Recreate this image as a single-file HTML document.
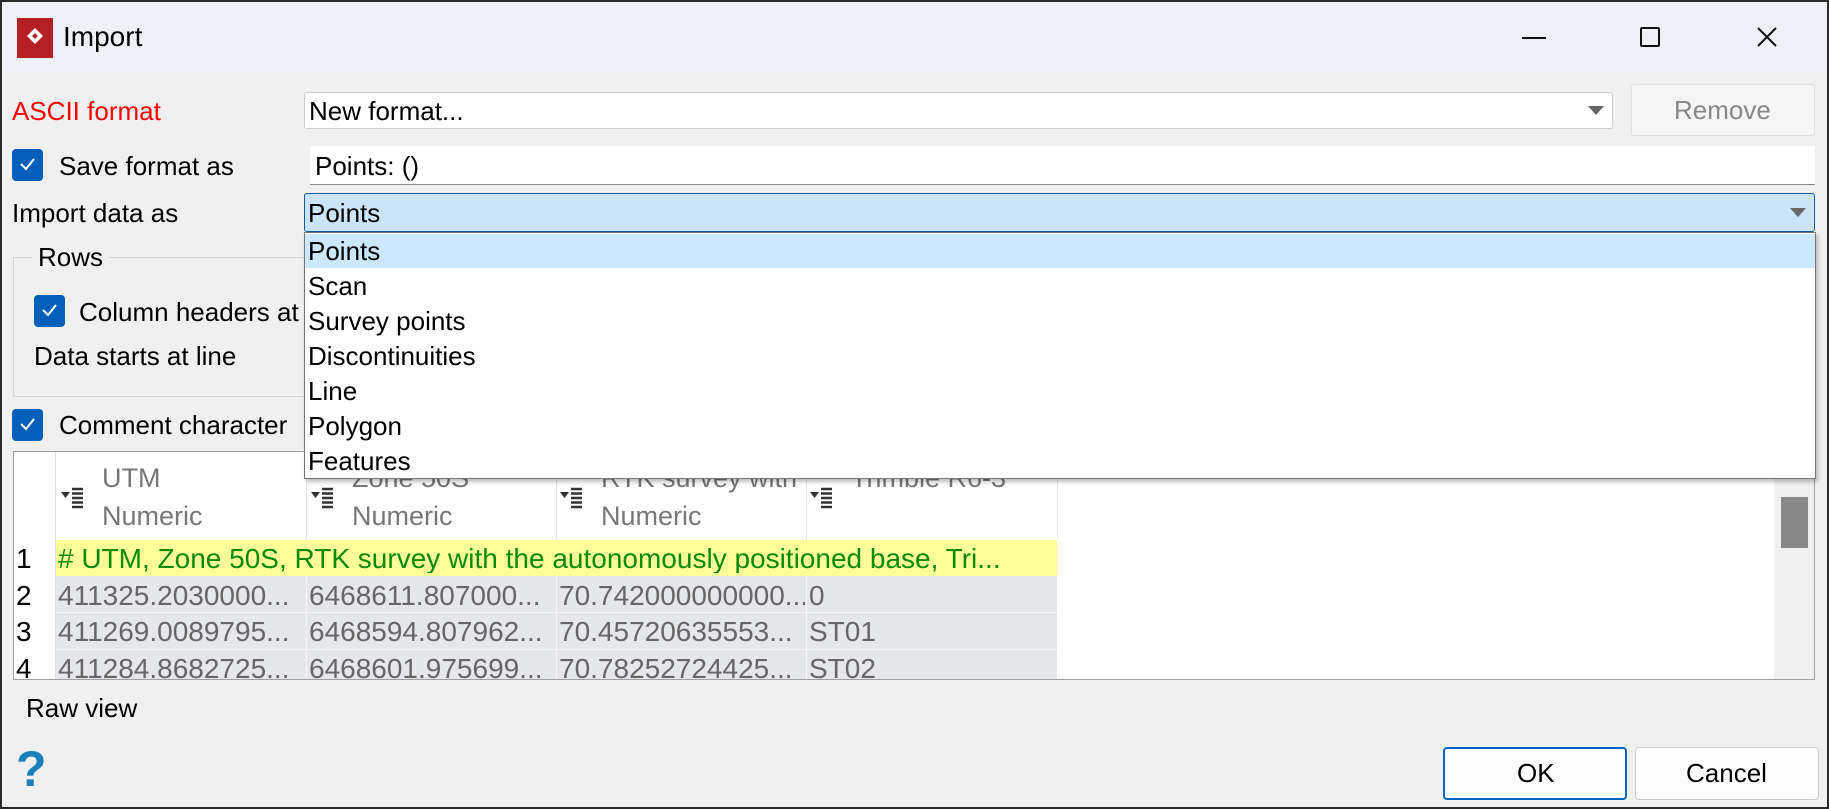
<!DOCTYPE html>
<html><head><meta charset="utf-8"><style>
*{box-sizing:border-box;margin:0;padding:0}
body{width:1829px;height:809px;overflow:hidden;background:#f0f0f0;font-family:"Liberation Sans",sans-serif;font-size:26px;color:#000;position:relative}
.a{position:absolute;white-space:nowrap}
.frame{position:absolute;left:0;top:0;width:1829px;height:809px;border:2px solid #2b2b2b;pointer-events:none}
.cb{position:absolute;width:31px;height:32px;background:#005fb8;border-radius:4px}
.cb svg{position:absolute;left:7px;top:8px}
.t{line-height:1}
.d{font-size:28px;color:#666}
.h{font-size:27px;color:#777}
</style></head><body>
<div class="a" style="left:0;top:0;width:1829px;height:72px;background:#eef2f7"></div>
<div class="a" style="left:17px;top:18px;width:36px;height:40px;background:#b52025"></div>
<svg class="a" style="left:21px;top:25px" width="28" height="24" viewBox="0 0 28 24"><path d="M14 3 L22 11 L14 19 L6 11 Z M14 8 L17 11 L14 14 L11 11 Z" fill="#fff" fill-rule="evenodd"/></svg>
<div class="a t" style="left:63px;top:23px;font-size:28px">Import</div>
<div class="a" style="left:1522px;top:37px;width:24px;height:2px;background:#111"></div>
<div class="a" style="left:1640px;top:27px;width:20px;height:20px;border:2px solid #111;border-radius:2px"></div>
<svg class="a" style="left:1756px;top:26px" width="22" height="22"><path d="M2 2L20 20M20 2L2 20" stroke="#111" stroke-width="2"/></svg>

<div class="a t" style="left:12px;top:98px;color:#f00">ASCII format</div>
<div class="a" style="left:304px;top:92px;width:1309px;height:37px;background:#fff;border:1px solid #ccc;border-radius:3px"></div>
<div class="a t" style="left:309px;top:98px">New format...</div>
<svg class="a" style="left:1588px;top:106px" width="16" height="9"><path d="M0 0H16L8 9Z" fill="#666"/></svg>
<div class="a" style="left:1631px;top:84px;width:184px;height:52px;background:#f5f5f5;border:1px solid #e0e0e0;border-radius:3px"></div>
<div class="a t" style="left:1674px;top:97px;color:#888">Remove</div>

<div class="cb" style="left:12px;top:149px"><svg width="17" height="14"><path d="M2 7L7 12L15 2" stroke="#fff" stroke-width="2" fill="none"/></svg></div>
<div class="a t" style="left:59px;top:153px">Save format as</div>
<div class="a" style="left:310px;top:146px;width:1505px;height:39px;background:#fff;border-bottom:1px solid #888"></div>
<div class="a t" style="left:315px;top:153px">Points: ()</div>

<div class="a t" style="left:12px;top:200px">Import data as</div>
<div class="a" style="left:304px;top:193px;width:1511px;height:39px;background:#cce4f7;border:1px solid #0b5cad;border-radius:3px"></div>
<div class="a t" style="left:308px;top:200px">Points</div>
<svg class="a" style="left:1790px;top:208px" width="16" height="9"><path d="M0 0H16L8 9Z" fill="#666"/></svg>

<div class="a" style="left:13px;top:257px;width:293px;height:140px;border:1px solid #d5d5d5"></div>
<div class="a t" style="left:32px;top:244px;background:#f0f0f0;padding:0 6px">Rows</div>
<div class="cb" style="left:34px;top:295px"><svg width="17" height="14"><path d="M2 7L7 12L15 2" stroke="#fff" stroke-width="2" fill="none"/></svg></div>
<div class="a t" style="left:79px;top:299px">Column headers at</div>
<div class="a t" style="left:34px;top:343px">Data starts at line</div>
<div class="cb" style="left:12px;top:409px"><svg width="17" height="14"><path d="M2 7L7 12L15 2" stroke="#fff" stroke-width="2" fill="none"/></svg></div>
<div class="a t" style="left:59px;top:412px">Comment character</div>

<!-- table -->
<div class="a" style="left:13px;top:451px;width:1802px;height:229px;background:#fff;border:1px solid #a0a0a0;overflow:hidden">
 <div class="a" style="left:0;top:0;width:42px;height:229px;border-right:1px solid #e0e0e0"></div>
 <div class="a" style="left:42px;top:88px;width:1001px;height:36px;background:#ffff99"></div>
 <div class="a" style="left:42px;top:124px;width:1001px;height:105px;background:#e6e7ea"></div>
 <div class="a" style="left:42px;top:160px;width:1001px;height:1px;background:#f5f5f5"></div>
 <div class="a" style="left:42px;top:197px;width:1001px;height:1px;background:#f5f5f5"></div>
 <div class="a" style="left:292px;top:0;width:1px;height:88px;background:#e4e4e4"></div>
 <div class="a" style="left:542px;top:0;width:1px;height:88px;background:#e4e4e4"></div>
 <div class="a" style="left:792px;top:0;width:1px;height:88px;background:#e4e4e4"></div>
 <div class="a" style="left:1043px;top:0;width:1px;height:88px;background:#e4e4e4"></div>
 <div class="a" style="left:292px;top:124px;width:1px;height:105px;background:#f5f5f5"></div>
 <div class="a" style="left:542px;top:124px;width:1px;height:105px;background:#f5f5f5"></div>
 <div class="a" style="left:792px;top:124px;width:1px;height:105px;background:#f5f5f5"></div>
 <div class="a t h" style="left:88px;top:13px">UTM</div>
 <div class="a t h" style="left:88px;top:51px">Numeric</div>
 <div class="a t h" style="left:338px;top:13px">Zone 50S</div>
 <div class="a t h" style="left:338px;top:51px">Numeric</div>
 <div class="a t h" style="left:587px;top:13px">RTK survey with</div>
 <div class="a t h" style="left:587px;top:51px">Numeric</div>
 <div class="a t h" style="left:837px;top:13px">Trimble R6-3</div>
 <svg class="a" style="left:47px;top:34px" width="26" height="24"><path d="M0 6H9L4.5 12Z" fill="#333"/><path d="M11 3H22M11 7.5H22M11 12H22M11 16.5H22M11 21H22" stroke="#333" stroke-width="2.5"/></svg>
 <svg class="a" style="left:297px;top:34px" width="26" height="24"><path d="M0 6H9L4.5 12Z" fill="#333"/><path d="M11 3H22M11 7.5H22M11 12H22M11 16.5H22M11 21H22" stroke="#333" stroke-width="2.5"/></svg>
 <svg class="a" style="left:546px;top:34px" width="26" height="24"><path d="M0 6H9L4.5 12Z" fill="#333"/><path d="M11 3H22M11 7.5H22M11 12H22M11 16.5H22M11 21H22" stroke="#333" stroke-width="2.5"/></svg>
 <svg class="a" style="left:796px;top:34px" width="26" height="24"><path d="M0 6H9L4.5 12Z" fill="#333"/><path d="M11 3H22M11 7.5H22M11 12H22M11 16.5H22M11 21H22" stroke="#333" stroke-width="2.5"/></svg>
 <div class="a t" style="left:2px;top:93px;font-size:28px">1</div>
 <div class="a t" style="left:2px;top:130px;font-size:28px">2</div>
 <div class="a t" style="left:2px;top:166px;font-size:28px">3</div>
 <div class="a t" style="left:2px;top:203px;font-size:28px">4</div>
 <div class="a t" style="left:44px;top:93px;font-size:28px;color:#0a8a0a;width:998px;overflow:hidden">#&nbsp;UTM, Zone 50S, RTK survey with the autonomously positioned base, Tri...</div>
 <div class="a t d" style="left:44px;top:130px">411325.2030000...</div>
 <div class="a t d" style="left:295px;top:130px">6468611.807000...</div>
 <div class="a t d" style="left:545px;top:130px;width:246px;overflow:hidden">70.742000000000...</div>
 <div class="a t d" style="left:795px;top:130px">0</div>
 <div class="a t d" style="left:44px;top:166px">411269.0089795...</div>
 <div class="a t d" style="left:295px;top:166px">6468594.807962...</div>
 <div class="a t d" style="left:545px;top:166px">70.45720635553...</div>
 <div class="a t d" style="left:795px;top:166px">ST01</div>
 <div class="a t d" style="left:44px;top:203px">411284.8682725...</div>
 <div class="a t d" style="left:295px;top:203px">6468601.975699...</div>
 <div class="a t d" style="left:545px;top:203px">70.78252724425...</div>
 <div class="a t d" style="left:795px;top:203px">ST02</div>
 <div class="a" style="left:1760px;top:0;width:40px;height:229px;background:#f0f0f0"></div>
 <div class="a" style="left:1767px;top:45px;width:27px;height:51px;background:#888"></div>
</div>

<!-- dropdown list -->
<div class="a" style="left:304px;top:232px;width:1512px;height:247px;background:#fff;border:1px solid #767676;box-shadow:2px 3px 4px rgba(0,0,0,.25)">
 <div class="a" style="left:0;top:1px;width:1510px;height:34px;background:#cce8ff"></div>
 <div class="a t" style="left:3px;top:5px">Points</div>
 <div class="a t" style="left:3px;top:40px">Scan</div>
 <div class="a t" style="left:3px;top:75px">Survey points</div>
 <div class="a t" style="left:3px;top:110px">Discontinuities</div>
 <div class="a t" style="left:3px;top:145px">Line</div>
 <div class="a t" style="left:3px;top:180px">Polygon</div>
 <div class="a t" style="left:3px;top:215px">Features</div>
</div>

<div class="a t" style="left:26px;top:695px">Raw view</div>
<div class="a" style="left:16px;top:744px;font-size:50px;font-weight:bold;color:#1a7fba;line-height:1">?</div>
<div class="a" style="left:1443px;top:747px;width:184px;height:53px;background:#fdfdfd;border:2px solid #0067c0;border-radius:4px"></div>
<div class="a t" style="left:1517px;top:760px">OK</div>
<div class="a" style="left:1635px;top:747px;width:184px;height:53px;background:#fdfdfd;border:1px solid #ccc;border-radius:4px"></div>
<div class="a t" style="left:1686px;top:760px">Cancel</div>
<div class="frame"></div>
</body></html>
